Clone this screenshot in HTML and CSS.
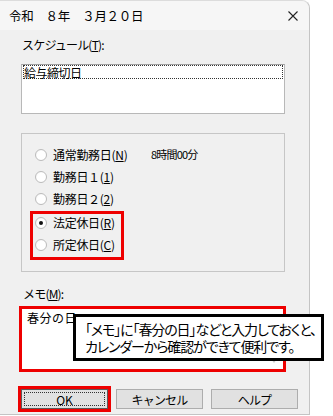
FILE: index.html
```html
<!DOCTYPE html>
<html lang="ja">
<head>
<meta charset="utf-8">
<link rel="stylesheet" href="styles.css">
</head>
<body>
<div class="window">
  <div class="titlebar">
    <span class="title">令和　８年　３月２０日</span>
    <svg class="close" width="10" height="10" viewBox="0 0 10 10"><path d="M0.5 0.5 L9.5 9.5 M9.5 0.5 L0.5 9.5" stroke="#222" stroke-width="1.1" fill="none"/></svg>
  </div>
  <div class="content">
    <div class="label">スケジュール(<u>T</u>):</div>
    <div class="textbox"><div class="focus">給与締切日</div></div>
    <div class="group">
      <div class="rows">
        <div class="row"><span class="radio"></span><span class="rlabel wide">通常勤務日(<u>N</u>)</span><span class="hours">8時間00分</span></div>
        <div class="row"><span class="radio"></span><span class="rlabel">勤務日１(<u>1</u>)</span></div>
        <div class="row"><span class="radio"></span><span class="rlabel">勤務日２(<u>2</u>)</span></div>
      </div>
      <div class="highlight">
        <div class="row"><span class="radio checked"></span><span class="rlabel">法定休日(<u>R</u>)</span></div>
        <div class="row"><span class="radio"></span><span class="rlabel">所定休日(<u>C</u>)</span></div>
      </div>
    </div>
    <div class="label memo-label">メモ(<u>M</u>):</div>
    <div class="memo-hl"><div class="memo">春分の日<span class="arrow"></span></div></div>
    <div class="buttons">
      <div class="ok-hl"><div class="btn default"><span class="btn-focus">OK</span></div></div>
      <div class="btn cancel">キャンセル</div>
      <div class="btn help">ヘルプ</div>
    </div>
  </div>
  <div class="callout">
    <div>「メモ」に「春分の日」などと入力しておくと、</div>
    <div>カレンダーから確認ができて便利です。</div>
  </div>
</div>
</body>
</html>
```

FILE: styles.css
```css
html, body {
  margin: 0;
  padding: 0;
  background: #ffffff;
}
body {
  width: 333px;
  height: 416px;
  overflow: hidden;
  font-family: "Noto Sans CJK JP", "Liberation Sans", sans-serif;
  font-size: 12px;
  color: #000;
}
u { text-decoration: underline; text-underline-offset: 1px; }
.window {
  position: relative;
  width: 310px;
  height: 415px;
  box-sizing: border-box;
  background: #f0f0f0;
  border-right: 1px solid #c4c4c4;
  border-bottom: 1px solid #c4c4c4;
  border-top-right-radius: 8px;
  border-top: 1px solid #dcdcdc;
}
.titlebar {
  height: 29px;
  background: #f6f6f6;
  display: flex;
  align-items: center;
  justify-content: space-between;
  padding: 0 11px 0 9px;
  border-top-right-radius: 8px;
}
.title {
  font-size: 12.5px;
  line-height: 14px;
  letter-spacing: -0.3px;
}
.close { display: block; }
.content {
  padding-left: 21px;
  display: flex;
  flex-direction: column;
  align-items: flex-start;
}
.label {
  margin-top: 8px;
  padding-left: 1px;
  height: 14px;
  line-height: 14px;
  font-size: 12px;
  letter-spacing: -0.8px;
}
.textbox {
  margin-top: 12px;
  width: 264px;
  height: 50px;
  box-sizing: border-box;
  background: #fff;
  border: 1px solid #b8b8b8;
  border-top-color: #a0a0a0;
  padding: 0 1px;
}
.focus {
  height: 14px;
  line-height: 13px;
  border: 1px dotted #333;
  box-sizing: border-box;
  font-size: 12px;
  letter-spacing: -0.5px;
}
.group {
  margin-top: 19px;
  width: 264px;
  box-sizing: border-box;
  border: 1px solid #c6c6c6;
  padding: 12px 0 11px 0;
}
.rows {
  display: flex;
  flex-direction: column;
  gap: 4px;
  padding-left: 13px;
}
.row {
  height: 18px;
  display: flex;
  align-items: center;
}
.radio {
  width: 12px;
  height: 12px;
  box-sizing: border-box;
  border-radius: 50%;
  border: 1px solid #bcbcbc;
  background: radial-gradient(circle at 60% 60%, #ffffff 55%, #ebebeb 100%);
  margin-right: 6px;
  flex: none;
  display: flex;
  align-items: center;
  justify-content: center;
}
.radio.checked::after {
  content: "";
  width: 4px;
  height: 4px;
  border-radius: 50%;
  background: #111;
}
.rlabel {
  font-size: 12px;
  line-height: 14px;
  letter-spacing: -0.3px;
}
.rlabel.wide { width: 98px; }
.hours {
  font-size: 11px;
  letter-spacing: -0.8px;
  line-height: 14px;
  margin-top: -3px;
}
.highlight {
  margin: 3px 0 0 8px;
  width: 94px;
  box-sizing: border-box;
  border: 3px solid #ee0000;
  padding: 0 0 3px 2px;
  display: flex;
  flex-direction: column;
  gap: 4px;
}
.memo-label {
  margin-top: 15px;
  padding-left: 2px;
}
.memo-hl {
  margin-top: 5px;
  margin-left: -2px;
  width: 267px;
  height: 66px;
  box-sizing: border-box;
  border: 3px solid #ee0000;
}
.memo {
  position: relative;
  height: 100%;
  background: #fff;
  padding: 1px 5px;
  box-sizing: border-box;
  font-size: 12px;
  line-height: 16px;
  letter-spacing: 0.5px;
}
.arrow {
  position: absolute;
  right: 6px;
  bottom: 6px;
  width: 0;
  height: 0;
  border-left: 3px solid transparent;
  border-right: 3px solid transparent;
  border-top: 4px solid #c8c8c8;
}
.buttons {
  margin-top: 14px;
  margin-left: -3px;
  display: flex;
  align-items: center;
}
.ok-hl {
  width: 93px;
  height: 26px;
  box-sizing: border-box;
  border: 3px solid #ee0000;
}
.btn {
  width: 87px;
  height: 20px;
  box-sizing: border-box;
  background: #e1e1e1;
  border: 1px solid #adadad;
  display: flex;
  align-items: center;
  justify-content: center;
  font-size: 12px;
  letter-spacing: -0.8px;
}
.btn.default {
  border: 1px solid #5a5a5a;
  padding: 2px;
}
.btn-focus {
  width: 100%;
  height: 100%;
  box-sizing: border-box;
  border: 1px dotted #333;
  display: flex;
  align-items: center;
  justify-content: center;
  letter-spacing: 0;
}
.cancel { margin-left: 5px; }
.help { margin-left: 8px; }
.callout {
  position: absolute;
  left: 73px;
  top: 313px;
  width: 251px;
  height: 47px;
  box-sizing: border-box;
  border: 3px solid #000;
  background: #fff;
  padding: 4px 0 0 9px;
  font-size: 14px;
  line-height: 17px;
  font-feature-settings: "palt";
  letter-spacing: -1.1px;
  white-space: nowrap;
}
```
